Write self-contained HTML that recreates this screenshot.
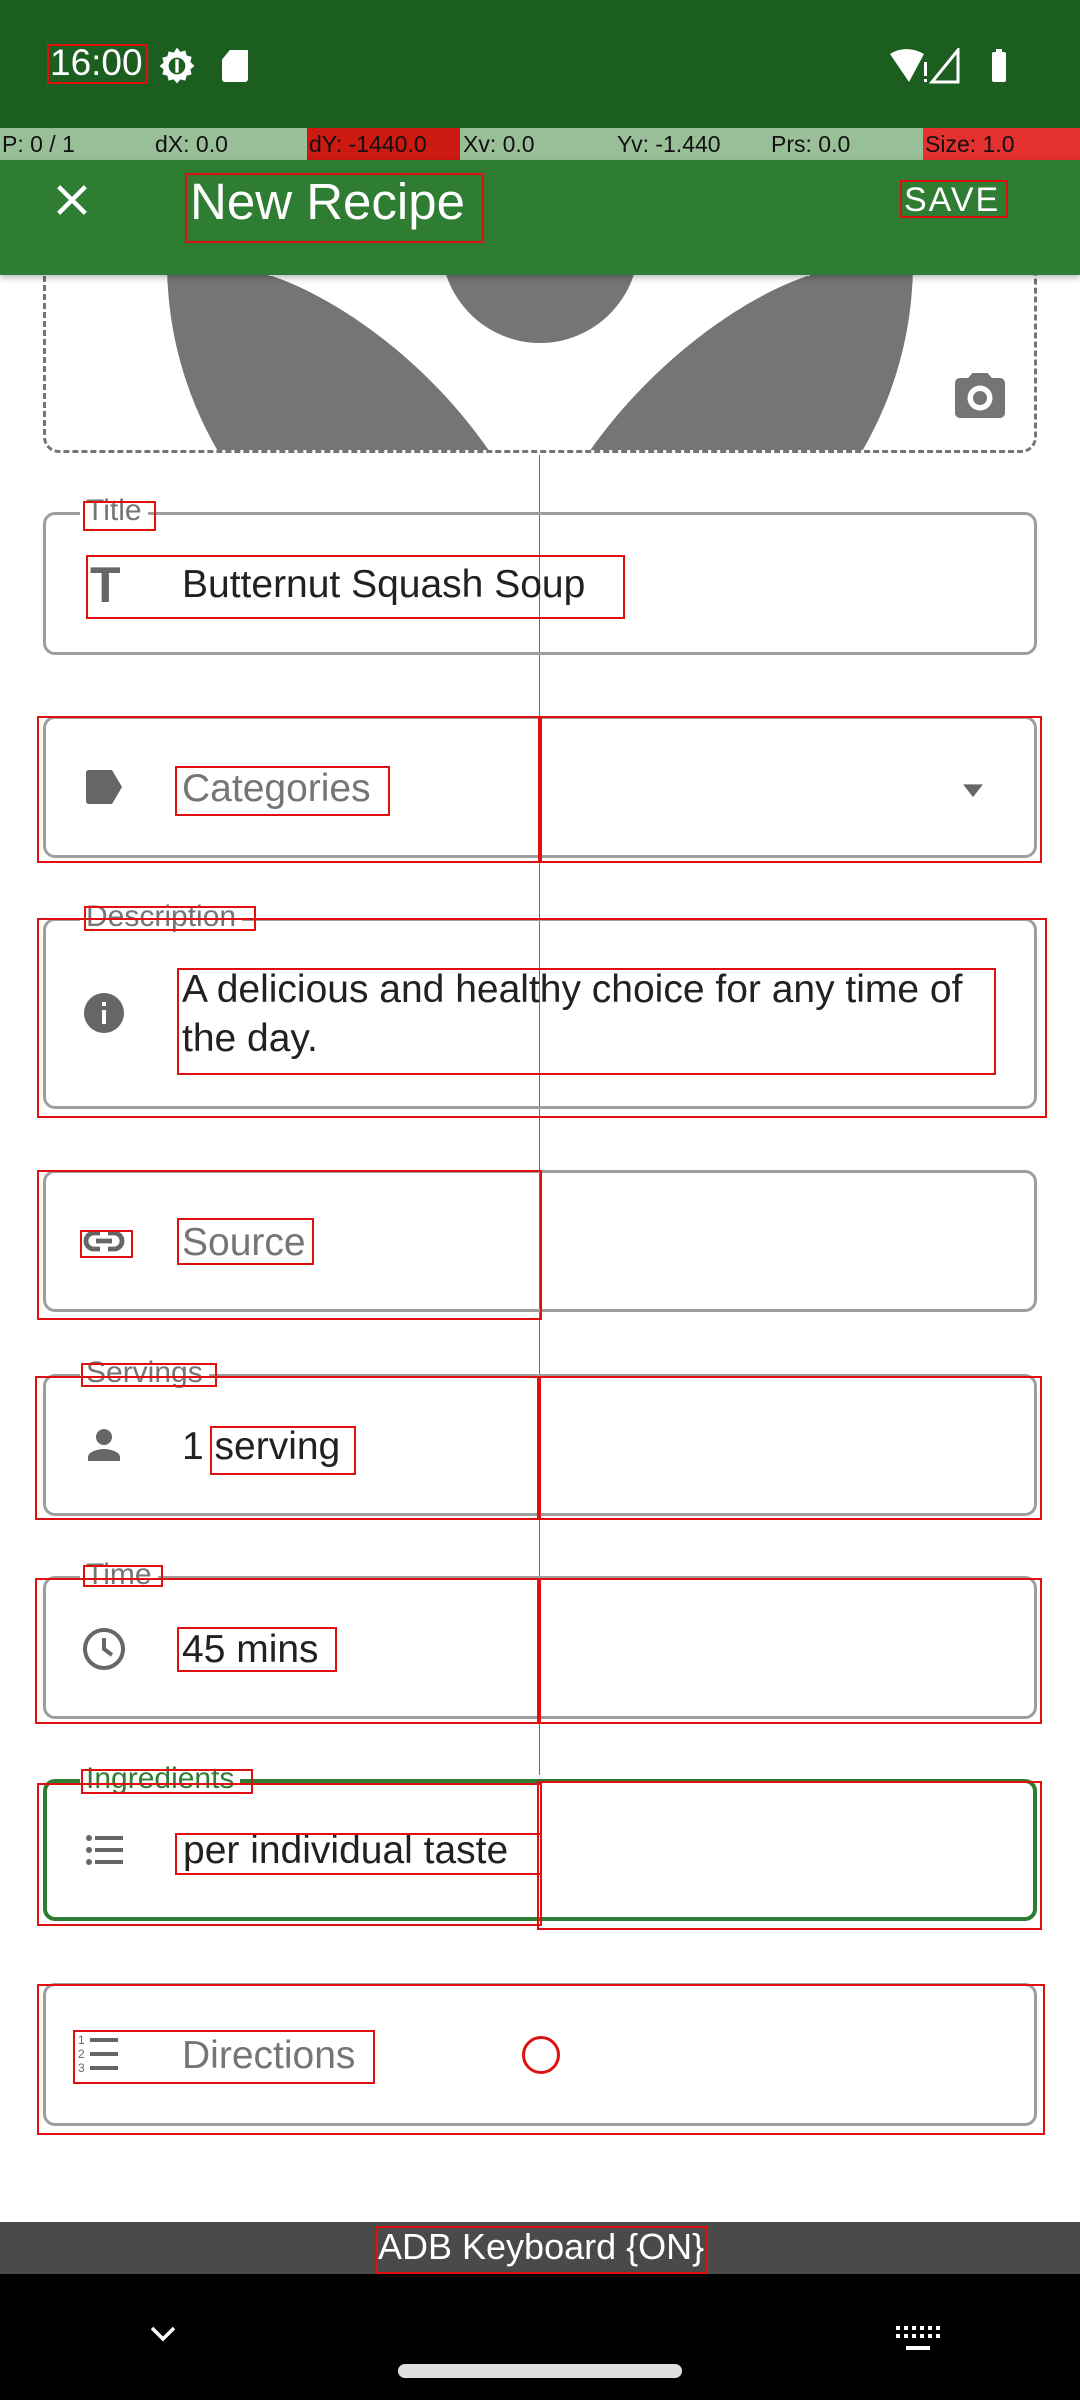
<!DOCTYPE html>
<html><head><meta charset="utf-8"><style>
*{margin:0;padding:0;box-sizing:border-box}
body{width:1080px;height:2400px;position:relative;background:#fff;font-family:"Liberation Sans",sans-serif;overflow:hidden}
.a{position:absolute}
.f{position:absolute;left:43px;width:994px;border:3px solid #9e9e9e;border-radius:12px}
.lab{position:absolute;left:34px;top:-20px;background:#fff;padding:0 6px;font-size:30px;color:#757575;line-height:32px}
.tx{position:absolute;left:136px;font-size:39px;color:#212121;line-height:49px}
.ph{color:#757575}
.ic{position:absolute;left:34px;width:48px;height:48px}
.r{position:absolute;border:2px solid #e01010}
.dbg{position:absolute;top:128px;height:32px;font-size:23px;line-height:32px;color:#111;font-family:"Liberation Sans",sans-serif}
</style></head><body>

<!-- image area -->
<div class="a" style="left:43px;top:200px;width:994px;height:253px;border:3px dashed #757575;border-top:none;border-radius:0 0 16px 16px;overflow:hidden">
 <svg width="994" height="253" style="position:absolute;left:-3px;top:0" viewBox="43 200 994 253">
  <circle cx="540" cy="263" r="373" fill="#757575"/>
  <path d="M269,275 C345,300 435,370 492,455 L587,455 C645,370 735,300 810,275 Z" fill="#fff"/>
  <rect x="269" y="200" width="541" height="76" fill="#fff"/>
  <ellipse cx="540" cy="243" rx="99" ry="100" fill="#757575"/>
 </svg>
</div>
<svg class="a" style="left:950px;top:368px" width="60" height="60" viewBox="0 0 24 24"><path fill="#757575" d="M9 2 7.2 4H4c-1.1 0-2 .9-2 2v12c0 1.1.9 2 2 2h16c1.1 0 2-.9 2-2V6c0-1.1-.9-2-2-2h-3.2L15 2H9zm3 15a5 5 0 1 1 0-10 5 5 0 0 1 0 10zm0-2.2a2.8 2.8 0 1 0 0-5.6 2.8 2.8 0 0 0 0 5.6z"/></svg>

<!-- status bar -->
<div class="a" style="left:0;top:0;width:1080px;height:128px;background:#1b5e20"></div>
<div class="a" style="left:50px;top:42px;font-size:37px;color:#fff">16:00</div>
<div class="r" style="left:47px;top:44px;width:101px;height:40px"></div>
<svg class="a" style="left:157px;top:46px" width="40" height="40" viewBox="0 0 24 24"><path fill="#fff" d="M12 1l2 2.5 3-.8.8 3 3 .8-.8 3L22.5 12 20 14l.8 3-3 .8-.8 3-3-.8L12 22.5 10 20l-3 .8-.8-3-3-.8.8-3L1.5 12 4 10l-.8-3 3-.8.8-3 3 .8z"/><circle cx="12" cy="12" r="5" fill="#1b5e20"/><rect x="11" y="8" width="2" height="8" fill="#fff"/></svg>
<div class="a" style="left:222px;top:50px;width:26px;height:32px;background:#fff;border-radius:4px 0 3px 3px;clip-path:polygon(30% 0,100% 0,100% 100%,0 100%,0 30%)"></div>
<svg class="a" style="left:888px;top:48px" width="120" height="36" viewBox="0 0 120 36"><path d="M2 6Q18-4 36 6L21 34z" fill="#fff"/><rect x="36" y="14" width="3" height="14" fill="#fff"/><rect x="36" y="31" width="3" height="3" fill="#fff"/><path d="M70 2V34H44z" fill="none" stroke="#fff" stroke-width="3"/><rect x="104" y="4" width="14" height="30" rx="2" fill="#fff"/><rect x="108" y="1" width="6" height="4" fill="#fff"/></svg>

<!-- debug bar -->
<div class="a" style="left:0;top:128px;width:1080px;height:32px;background:#99bf99"></div>
<div class="a" style="left:307px;top:128px;width:153px;height:32px;background:#cc1a10"></div>
<div class="a" style="left:923px;top:128px;width:157px;height:32px;background:#e53030"></div>
<div class="dbg" style="left:2px">P: 0 / 1</div>
<div class="dbg" style="left:155px">dX: 0.0</div>
<div class="dbg" style="left:309px">dY: -1440.0</div>
<div class="dbg" style="left:463px">Xv: 0.0</div>
<div class="dbg" style="left:617px">Yv: -1.440</div>
<div class="dbg" style="left:771px">Prs: 0.0</div>
<div class="dbg" style="left:925px">Size: 1.0</div>

<!-- toolbar -->
<div class="a" style="left:0;top:160px;width:1080px;height:115px;background:#2e7d32;box-shadow:0 3px 6px rgba(0,0,0,.25)"></div>
<svg class="a" style="left:52px;top:180px" width="40" height="40" viewBox="0 0 24 24"><path d="M4 4L20 20M20 4L4 20" stroke="#fff" stroke-width="2.6"/></svg>
<div class="a" style="left:190px;top:172px;font-size:51px;color:#fff">New Recipe</div>
<div class="r" style="left:185px;top:173px;width:299px;height:70px"></div>
<div class="a" style="left:904px;top:181px;font-size:34px;color:#fff;letter-spacing:2px">SAVE</div>
<div class="r" style="left:900px;top:180px;width:108px;height:38px"></div>

<!-- blue center line -->
<div class="a" style="left:539px;top:455px;width:1px;height:1320px;background:#4a70a8"></div>

<!-- Title -->
<div class="f" style="top:512px;height:143px"><div class="lab">Title</div>
 <div class="ic" style="top:46px;font-size:50px;font-weight:bold;color:#666;line-height:48px;left:44px">T</div>
 <div class="tx" style="top:45px">Butternut Squash Soup</div></div>
<div class="r" style="left:86px;top:555px;width:539px;height:64px"></div>
<div class="r" style="left:83px;top:501px;width:73px;height:30px"></div>

<!-- Categories -->
<div class="f" style="top:716px;height:142px">
 <svg class="ic" style="top:44px" viewBox="0 0 24 24"><path fill="#666" d="M3 5c0-1 .6-1.5 1.5-1.5H16l5 8.5-5 8.5H4.5C3.6 20.5 3 20 3 19z"/></svg>
 <div class="tx ph" style="top:45px">Categories</div>
 <svg class="a" style="left:910px;top:54px" width="34" height="34" viewBox="0 0 24 24"><path d="M5 8h14l-7 9z" fill="#666"/></svg></div>
<div class="r" style="left:37px;top:716px;width:1005px;height:147px"></div>
<div class="r" style="left:538px;top:716px;width:3px;height:147px"></div>
<div class="r" style="left:175px;top:766px;width:215px;height:50px"></div>

<!-- Description -->
<div class="f" style="top:918px;height:191px"><div class="lab">Description</div>
 <svg class="ic" style="top:68px" viewBox="0 0 24 24"><circle cx="12" cy="12" r="10" fill="#666"/><rect x="11" y="10.5" width="2" height="7" fill="#fff"/><rect x="11" y="6.5" width="2" height="2" fill="#fff"/></svg>
 <div class="tx" style="top:44px;width:820px">A delicious and healthy choice for any time of the day.</div></div>
<div class="r" style="left:37px;top:918px;width:1010px;height:200px"></div>
<div class="r" style="left:84px;top:906px;width:172px;height:25px"></div>
<div class="r" style="left:177px;top:968px;width:819px;height:107px"></div>

<!-- Source -->
<div class="f" style="top:1170px;height:142px">
 <svg class="ic" style="top:44px" viewBox="0 0 24 24"><path fill="none" stroke="#666" stroke-width="2.4" d="M10 8H7a4 4 0 0 0 0 8h3M14 8h3a4 4 0 0 1 0 8h-3M8 12h8"/></svg>
 <div class="tx ph" style="top:45px">Source</div></div>
<div class="r" style="left:37px;top:1170px;width:505px;height:150px"></div>
<div class="r" style="left:80px;top:1230px;width:53px;height:28px"></div>
<div class="r" style="left:177px;top:1218px;width:137px;height:47px"></div>

<!-- Servings -->
<div class="f" style="top:1374px;height:142px"><div class="lab">Servings</div>
 <svg class="ic" style="top:44px" viewBox="0 0 24 24"><circle cx="12" cy="8" r="4" fill="#666"/><path fill="#666" d="M4 20v-2c0-2.7 5.3-4 8-4s8 1.3 8 4v2z"/></svg>
 <div class="tx" style="top:45px">1 serving</div></div>
<div class="r" style="left:35px;top:1376px;width:1007px;height:144px"></div>
<div class="r" style="left:537px;top:1376px;width:4px;height:144px"></div>
<div class="r" style="left:81px;top:1363px;width:136px;height:24px"></div>
<div class="r" style="left:210px;top:1426px;width:146px;height:49px"></div>

<!-- Time -->
<div class="f" style="top:1576px;height:143px"><div class="lab">Time</div>
 <svg class="ic" style="top:46px" viewBox="0 0 24 24"><circle cx="12" cy="12" r="9.5" fill="none" stroke="#666" stroke-width="2"/><path d="M12 6.5V12l4 3" fill="none" stroke="#666" stroke-width="2"/></svg>
 <div class="tx" style="top:46px">45 mins</div></div>
<div class="r" style="left:35px;top:1578px;width:1007px;height:146px"></div>
<div class="r" style="left:537px;top:1578px;width:4px;height:146px"></div>
<div class="r" style="left:83px;top:1565px;width:80px;height:22px"></div>
<div class="r" style="left:177px;top:1627px;width:160px;height:45px"></div>

<!-- Ingredients -->
<div class="f" style="top:1779px;height:142px;border:4px solid #2e7d32"><div class="lab" style="color:#2e7d32;left:33px">Ingredients</div>
 <svg class="ic" style="top:43px" viewBox="0 0 24 24"><g fill="#666"><circle cx="4" cy="6" r="1.5"/><circle cx="4" cy="12" r="1.5"/><circle cx="4" cy="18" r="1.5"/><rect x="7" y="5" width="14" height="2"/><rect x="7" y="11" width="14" height="2"/><rect x="7" y="17" width="14" height="2"/></g></svg>
 <div class="tx" style="top:43px">per individual taste</div></div>
<div class="r" style="left:37px;top:1783px;width:505px;height:143px"></div>
<div class="r" style="left:537px;top:1781px;width:505px;height:149px"></div>
<div class="r" style="left:81px;top:1769px;width:172px;height:25px"></div>
<div class="r" style="left:175px;top:1833px;width:367px;height:42px"></div>

<!-- Directions -->
<div class="f" style="top:1983px;height:143px">
 <svg class="ic" style="top:44px;left:30px" viewBox="0 0 24 24"><g fill="#666"><rect x="7" y="4" width="14" height="2"/><rect x="7" y="11" width="14" height="2"/><rect x="7" y="18" width="14" height="2"/></g><text x="1" y="7" font-size="6" fill="#666" font-family="Liberation Sans">1</text><text x="1" y="14" font-size="6" fill="#666" font-family="Liberation Sans">2</text><text x="1" y="21" font-size="6" fill="#666" font-family="Liberation Sans">3</text></svg>
 <div class="tx ph" style="top:45px">Directions</div>
 <div class="a" style="left:476px;top:50px;width:38px;height:38px;border:3px solid #e01010;border-radius:50%"></div></div>
<div class="r" style="left:37px;top:1984px;width:1008px;height:151px"></div>
<div class="r" style="left:73px;top:2030px;width:302px;height:54px"></div>

<!-- ADB bar -->
<div class="a" style="left:0;top:2222px;width:1080px;height:52px;background:#4a4a4a"></div>
<div class="a" style="left:378px;top:2226px;font-size:36px;color:#fff;line-height:42px">ADB Keyboard {ON}</div>
<div class="r" style="left:376px;top:2226px;width:332px;height:48px"></div>

<!-- nav -->
<div class="a" style="left:0;top:2274px;width:1080px;height:126px;background:#000"></div>
<svg class="a" style="left:148px;top:2322px" width="30" height="24" viewBox="0 0 30 24"><path d="M4 6l11 11 11-11" fill="none" stroke="#fff" stroke-width="3.5"/></svg>
<svg class="a" style="left:896px;top:2326px" width="44" height="32" viewBox="0 0 44 32"><g fill="#fff"><rect x="0" y="0" width="4" height="4"/><rect x="8" y="0" width="4" height="4"/><rect x="16" y="0" width="4" height="4"/><rect x="24" y="0" width="4" height="4"/><rect x="32" y="0" width="4" height="4"/><rect x="40" y="0" width="4" height="4"/><rect x="0" y="8" width="4" height="4"/><rect x="8" y="8" width="4" height="4"/><rect x="16" y="8" width="4" height="4"/><rect x="24" y="8" width="4" height="4"/><rect x="32" y="8" width="4" height="4"/><rect x="40" y="8" width="4" height="4"/><rect x="10" y="20" width="24" height="4"/></g></svg>
<div class="a" style="left:398px;top:2364px;width:284px;height:14px;border-radius:7px;background:#e0e0e0"></div>
</body></html>
